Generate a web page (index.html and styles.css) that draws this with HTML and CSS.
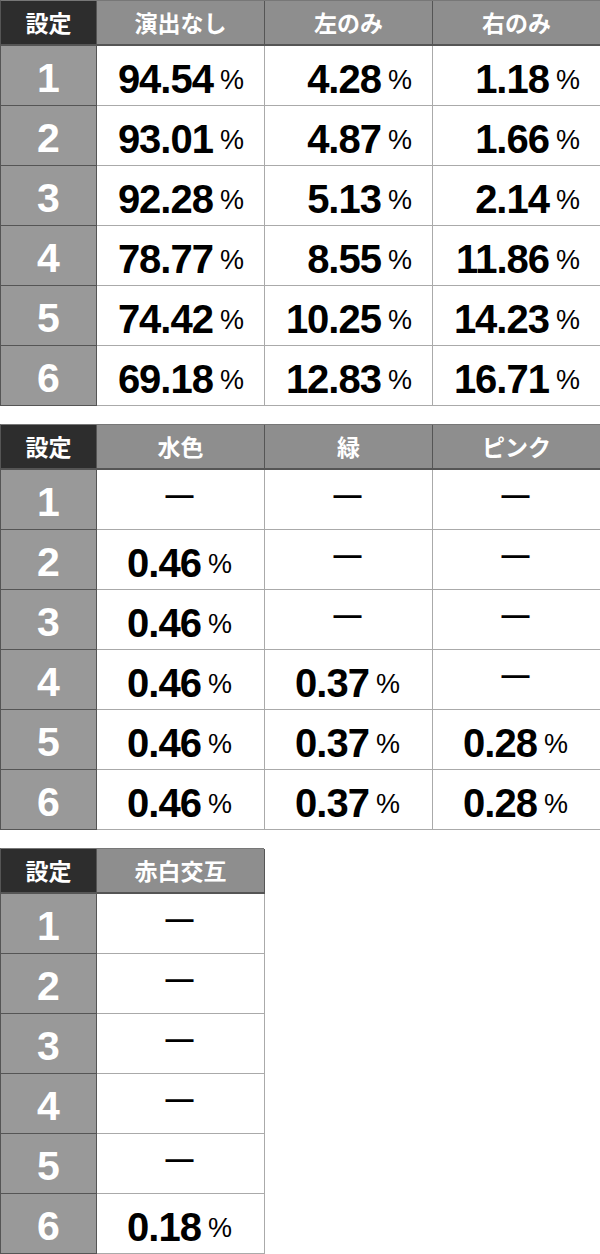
FILE: index.html
```html
<!DOCTYPE html>
<html lang="ja">
<head>
<meta charset="utf-8">
<link rel="stylesheet" href="styles.css">
</head>
<body>
<div class="tbl t4 right">
  <div class="hd hd-dark">設定</div><div class="hd">演出なし</div><div class="hd">左のみ</div><div class="hd">右のみ</div>
  <div class="lb">1</div><div class="v">94.54<span class="p">%</span></div><div class="v">4.28<span class="p">%</span></div><div class="v">1.18<span class="p">%</span></div>
  <div class="lb">2</div><div class="v">93.01<span class="p">%</span></div><div class="v">4.87<span class="p">%</span></div><div class="v">1.66<span class="p">%</span></div>
  <div class="lb">3</div><div class="v">92.28<span class="p">%</span></div><div class="v">5.13<span class="p">%</span></div><div class="v">2.14<span class="p">%</span></div>
  <div class="lb">4</div><div class="v">78.77<span class="p">%</span></div><div class="v">8.55<span class="p">%</span></div><div class="v">11.86<span class="p">%</span></div>
  <div class="lb">5</div><div class="v">74.42<span class="p">%</span></div><div class="v">10.25<span class="p">%</span></div><div class="v">14.23<span class="p">%</span></div>
  <div class="lb">6</div><div class="v">69.18<span class="p">%</span></div><div class="v">12.83<span class="p">%</span></div><div class="v">16.71<span class="p">%</span></div>
</div>
<div class="tbl t4 center">
  <div class="hd hd-dark">設定</div><div class="hd">水色</div><div class="hd">緑</div><div class="hd">ピンク</div>
  <div class="lb">1</div><div class="v"><span class="dash">—</span></div><div class="v"><span class="dash">—</span></div><div class="v"><span class="dash">—</span></div>
  <div class="lb">2</div><div class="v">0.46<span class="p">%</span></div><div class="v"><span class="dash">—</span></div><div class="v"><span class="dash">—</span></div>
  <div class="lb">3</div><div class="v">0.46<span class="p">%</span></div><div class="v"><span class="dash">—</span></div><div class="v"><span class="dash">—</span></div>
  <div class="lb">4</div><div class="v">0.46<span class="p">%</span></div><div class="v">0.37<span class="p">%</span></div><div class="v"><span class="dash">—</span></div>
  <div class="lb">5</div><div class="v">0.46<span class="p">%</span></div><div class="v">0.37<span class="p">%</span></div><div class="v">0.28<span class="p">%</span></div>
  <div class="lb">6</div><div class="v">0.46<span class="p">%</span></div><div class="v">0.37<span class="p">%</span></div><div class="v">0.28<span class="p">%</span></div>
</div>
<div class="tbl t2 center">
  <div class="hd hd-dark">設定</div><div class="hd">赤白交互</div>
  <div class="lb">1</div><div class="v"><span class="dash">—</span></div>
  <div class="lb">2</div><div class="v"><span class="dash">—</span></div>
  <div class="lb">3</div><div class="v"><span class="dash">—</span></div>
  <div class="lb">4</div><div class="v"><span class="dash">—</span></div>
  <div class="lb">5</div><div class="v"><span class="dash">—</span></div>
  <div class="lb">6</div><div class="v">0.18<span class="p">%</span></div>
</div>
</body>
</html>
```
FILE: styles.css
```css
* { box-sizing: border-box; }
html, body { margin: 0; padding: 0; background: #fff; }
body { width: 600px; font-family: "Liberation Sans", Arial, "Noto Sans CJK JP", sans-serif; }

.tbl {
  display: grid;
  grid-template-rows: 45px repeat(6, 60px);
  margin-bottom: 18px;
  border-top: 1px solid #777;
  border-left: 1px solid #555;
}
.tbl:last-child { margin-bottom: 0; }
.t4 { grid-template-columns: 96px repeat(3, 168px); width: 600px; }
.t2 { grid-template-columns: 96px 168px; width: 264px; }

.hd {
  background: #8e8e8e;
  color: #fff;
  font-family: "Noto Sans CJK JP", sans-serif;
  font-weight: 700;
  font-size: 23px;
  display: flex;
  align-items: center;
  justify-content: center;
  border-right: 1px solid #555;
  border-bottom: 2px solid #555;
  line-height: 1;
}
.hd-dark { background: #2d2d2d; }

.lb {
  background: #999;
  color: #fff;
  font-weight: 700;
  font-size: 41px;
  display: flex;
  align-items: center;
  justify-content: center;
  padding-top: 6px;
  border-right: 1px solid #555;
  border-bottom: 1px solid #555;
  line-height: 1;
}

.v {
  background: #fff;
  color: #000;
  font-weight: 700;
  font-size: 40px;
  letter-spacing: -1px;
  display: flex;
  align-items: center;
  padding-top: 6px;
  border-right: 1px solid #aaa;
  border-bottom: 1px solid #aaa;
  line-height: 1;
}
.right .v { justify-content: flex-end; padding-right: 20px; }
.center .v { justify-content: center; padding-right: 2px; }

.p {
  font-size: 27px;
  font-weight: 400;
  letter-spacing: 0;
  margin-left: 7px;
  padding-top: 4px;
}

.dash {
  font-size: 28px;
  font-weight: 700;
  letter-spacing: 0;
  margin-top: -16px;
}
```
